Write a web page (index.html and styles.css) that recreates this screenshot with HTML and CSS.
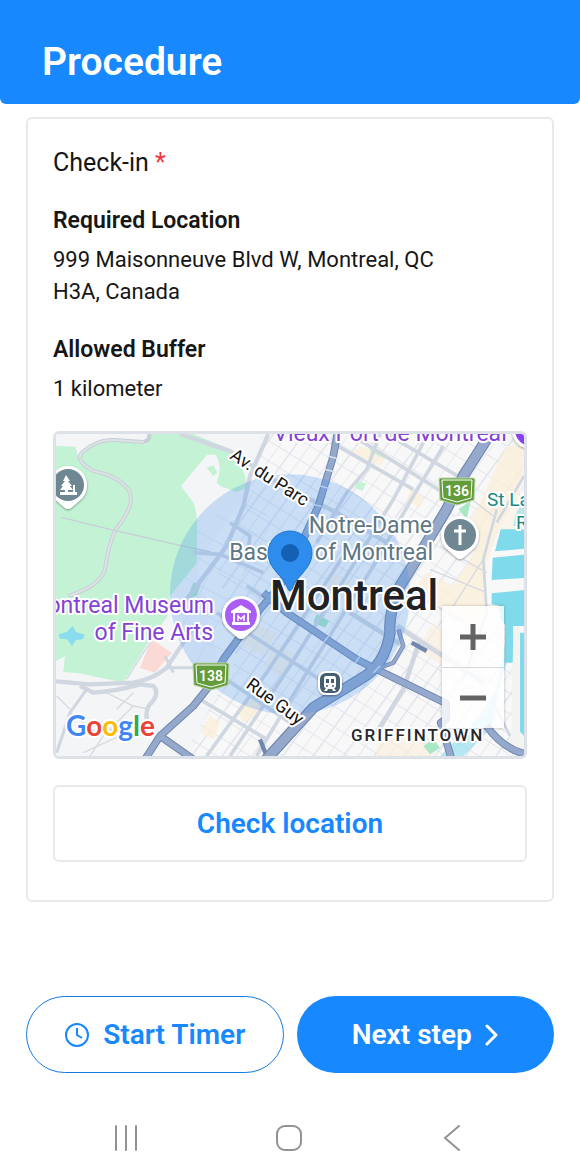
FILE: index.html
```html
<!DOCTYPE html>
<html lang="en">
<head>
<meta charset="utf-8">
<meta name="viewport" content="width=device-width, initial-scale=1">
<title>Procedure</title>
<link rel="stylesheet" href="styles.css">
</head>
<body>
<header class="header"><h1 class="header-title">Procedure</h1></header>
<main class="main">
  <section class="card">
    <h2 class="field-title">Check-in <span class="required">*</span></h2>
    <div class="info">
      <h3 class="info-label">Required Location</h3>
      <p class="info-text">999 Maisonneuve Blvd W, Montreal, QC<br>H3A, Canada</p>
    </div>
    <div class="info">
      <h3 class="info-label">Allowed Buffer</h3>
      <p class="info-text">1 kilometer</p>
    </div>
    <div class="map">
      <svg class="map-canvas" viewBox="0 0 468 322" preserveAspectRatio="xMidYMid slice" role="img" aria-label="Map of Montreal">
        <defs>
          <pattern id="blocks" width="74" height="52" patternUnits="userSpaceOnUse" patternTransform="rotate(32) skewX(-4)">
            <path d="M0 0H74M0 0V52M40 0V52" fill="none" stroke="#dde1e8" stroke-width="4"/>
          </pattern>
          <pattern id="blocks-wide" width="90" height="70" patternUnits="userSpaceOnUse" patternTransform="rotate(28)">
            <path d="M0 0H90M0 0V70" fill="none" stroke="#e2e6ec" stroke-width="4"/>
          </pattern>
          <filter id="shade" x="-30%" y="-30%" width="160%" height="170%"><feDropShadow dx="0" dy="1" stdDeviation="1" flood-opacity=".4"/></filter>
        </defs>
        <svg width="468" height="322" viewBox="18 24 1404 966">
          <rect x="18" y="24" width="1404" height="966" fill="#f4f5f6"/>
          <!-- built-up blocks -->
          <path d="M640 24H1320L1422 200V990H420L520 780L440 420L600 180Z" fill="#f8f8f9"/>
          <path d="M640 24H1422V200L1200 560L1422 620V990H400L560 700L500 400L600 180Z" fill="url(#blocks)"/>
          <path d="M440 310L600 200L700 330L560 640L440 740L370 560Z" fill="url(#blocks-wide)"/>
          <!-- commercial areas -->
          <g fill="#fbefd9">
            <path d="M1330 140L1290 230L1250 310L1290 350L1210 480L1130 440L1090 490L1180 560L1300 600L1310 410L1350 300L1400 230L1422 120V60H1370Z" opacity=".8"/>
            <path d="M980 930L1180 920L1150 990H980ZM1150 590L1180 620V720L1100 670Z" opacity=".6"/>
            <path d="M930 60L1010 90L990 120L910 80ZM1080 190L1120 210L1110 245L1070 225ZM560 850L620 810L640 850L580 890ZM480 870L510 890L490 940L450 920Z" opacity=".8"/>
            <path d="M600 590L680 620L640 690L570 660ZM680 650L740 690L700 760L640 720ZM850 440L910 470L880 530L820 500Z" opacity=".5"/>
          </g>
          <path d="M1340 320L1380 250L1422 210V330Z" fill="#faf5ea"/>
          <!-- parks -->
          <g fill="#c3f2d5">
            <path d="M18 60L76 62L84 90Q120 50 165 42L290 55L305 24H430L530 65L545 100Q592 125 588 185L560 198L512 180L500 170Q520 120 495 85L470 88L393 180L430 230Q443 260 441 310V410L360 510L350 575L300 640L220 770L90 742L40 738L45 690L18 705Z"/>
            <path d="M470 125L490 118L502 140L490 150ZM920 165L948 172L938 195L915 185ZM960 65L985 70L1015 90L1010 100L960 78Z"/>
            <path d="M1225 250L1262 225L1250 280ZM800 565L838 585L825 605L790 590ZM430 470L452 475L440 510L410 520ZM1120 960L1150 940L1170 965L1140 985Z" fill="#a9e8c5"/>
          </g>
          <path d="M305 640L365 680L315 740L270 725Z" fill="#fbd9d5"/>
          <path d="M26 625L50 618L68 600L78 618L104 626L98 640L78 642L66 660L52 640L30 638Z" fill="#8adcee"/>
          <!-- river and docks -->
          <g fill="#7fdaeb">
            <path d="M1352 310H1422V368L1335 376ZM1328 395L1422 386V456L1325 462ZM1325 502L1422 492V600H1368L1352 580L1345 538L1325 535ZM1375 590L1390 598V710H1365V600ZM1410 620H1422V930L1408 915Z"/>
            <path d="M1395 270L1422 215V300H1390ZM1340 790L1365 650L1372 705L1350 770L1330 880L1310 920L1240 990H1170L1230 930L1290 870Z" opacity=".55"/>
          </g>
          <path d="M1390 600H1410V920L1422 940V990H1370L1385 900Z" fill="#f3f3f2"/>
          <!-- park trails -->
          <g fill="none" stroke="#c7cfd6" stroke-linecap="round" stroke-linejoin="round">
            <path d="M60 508Q150 480 165 430Q180 330 205 300Q260 230 235 190Q205 150 130 135Q75 105 95 80Q140 40 190 42L280 48Q300 45 298 24" stroke-width="12"/>
            <path d="M60 508Q150 480 165 430Q180 330 205 300Q260 230 235 190Q205 150 130 135Q75 105 95 80Q140 40 190 42L280 48" stroke="#dde2e5" stroke-width="6"/>
            <path d="M34 274L180 310L380 356L480 378L620 430" stroke-width="4"/>
          </g>
          <!-- secondary streets -->
          <g fill="none" stroke="#d0d7e0" stroke-width="13" stroke-linejoin="round">
            <path d="M18 766L120 775L250 770Q310 760 350 725L440 590"/>
            <path d="M90 780L130 800Q200 795 270 775L310 780Q330 800 305 830Q280 850 295 900"/>
            <path d="M110 790L60 860L20 980M350 725H440M345 690L370 740" stroke-width="9"/>
            <path d="M390 24L540 75L700 180L860 260L1110 410"/>
            <path d="M655 24L600 150L580 240L530 360L500 400L380 560"/>
            <path d="M540 290L600 330L590 400M430 380L510 385L640 440" stroke-width="11"/>
            <path d="M800 24L1090 190M900 24L1180 200M1010 24L1240 160" stroke-width="11"/>
            <path d="M990 24L950 130L890 200L800 350M1120 50L1030 220L920 400L720 720L540 990" stroke-width="11"/>
            <path d="M1180 60L1090 210L970 420L770 740L620 990M880 390L650 740L470 990" stroke-width="11"/>
            <path d="M500 560L870 800M590 480L960 720M470 720L720 890M450 820L650 940" stroke-width="11"/>
            <path d="M1040 600L1180 690L1300 770M1110 640L1060 790L980 920M900 560L1060 660" stroke-width="14"/>
            <path d="M1340 250L1300 400L1310 560L1240 760M1422 150L1340 290M1330 830L1380 930" stroke-width="8"/>
          </g>
          <g fill="none" stroke="#d5dae1" stroke-width="4">
            <path d="M170 800L250 840L300 850M250 840L160 930L120 990M60 860L140 920L240 900M230 760L280 680L330 610M20 810L60 850M250 800L200 850M100 980L230 920L340 935"/>
            <path d="M1140 430L1310 500M1170 360L1310 440M1120 520L1250 590M1240 200L1330 270M1210 540L1300 400"/>
          </g>
          <!-- highways -->
          <g fill="none" stroke-linejoin="round">
            <g stroke="#7087af">
              <path d="M862 24L850 90L805 240L760 340L690 480L630 550L520 700L470 790L430 840L330 930L285 1000" stroke-width="23"/>
              <path d="M330 930L430 1000M640 500L710 560L830 640L920 700L1000 740L1188 832V880L1172 890L1205 1000M1310 900Q1360 970 1430 985" stroke-width="23"/>
              <path d="M1320 24L1240 150L1190 250L1100 400L1050 480Q1015 560 1020 620Q1005 720 930 760L790 845L640 1010" stroke-width="34"/>
              <path d="M1045 610L1060 660L1030 710L990 725M1085 650L1130 675M630 940L650 990" stroke-width="13"/>
            </g>
            <g stroke="#94a9cc">
              <path d="M862 24L850 90L805 240L760 340L690 480L630 550L520 700L470 790L430 840L330 930L285 1000" stroke-width="17"/>
              <path d="M330 930L430 1000M640 500L710 560L830 640L920 700L1000 740L1188 832V880L1172 890L1205 1000M1310 900Q1360 970 1430 985" stroke-width="17"/>
              <path d="M1320 24L1240 150L1190 250L1100 400L1050 480Q1015 560 1020 620Q1005 720 930 760L790 845L640 1010" stroke-width="27"/>
              <path d="M1045 610L1060 660L1030 710L990 725" stroke-width="8"/>
            </g>
            <path d="M833 90L862 98M825 130L855 138M810 180L840 188M790 235L815 242M780 270L804 278M820 650L840 625M915 712L932 687M970 740L990 720" stroke="#dbe4f0" stroke-width="4"/>
          </g>
          <!-- one kilometre buffer -->
          <circle cx="720" cy="505" r="360" fill="#3f8fee" fill-opacity=".25"/>
        </svg>

        <g class="map-label poi-purple">
          <text x="334" y="7" text-anchor="middle">Vieux Port de Montreal</text>
          <text x="158" y="179" text-anchor="end">Montreal Museum</text>
          <text x="157" y="206" text-anchor="end">of Fine Arts</text>
        </g>
        <g class="map-label poi-gray">
          <text x="376" y="99" text-anchor="end">Notre-Dame</text>
          <text x="377" y="126" text-anchor="end">Basilica of Montreal</text>
        </g>
        <g class="map-label poi-teal">
          <text x="431" y="72">St Lawrence</text>
          <text x="460" y="95">River</text>
        </g>
        <g class="map-label street">
          <text transform="translate(173 24) rotate(33)">Av. du Parc</text>
          <text transform="translate(189 253) rotate(36)">Rue Guy</text>
        </g>
        <text class="map-label district" x="295" y="307">GRIFFINTOWN</text>
        <text class="map-label city" x="214" y="176">Montreal</text>

        <!-- route shields -->
        <g class="shield">
          <path class="shield-edge" d="M385 44H417Q419 44 419 46L418 66L401 71L384 66L383 46Q383 44 385 44Z"/>
          <path class="shield-face" d="M386 46H416L415 64L401 68L387 64Z"/>
          <text x="401" y="62">136</text>
          <path class="shield-edge" d="M139 229H171Q173 229 173 231L172 251L155 256L138 251L137 231Q137 229 139 229Z"/>
          <path class="shield-face" d="M140 231H170L169 249L155 253L141 249Z"/>
          <text x="155" y="247">138</text>
        </g>

        <!-- place pins -->
        <g filter="url(#shade)" fill="#fff">
          <path d="M12 32a19 19 0 0 1 19 19q0 10-8 16l-8 7q-3 2-6 0l-8-7q-8-6-8-16a19 19 0 0 1 19-19Z"/>
          <path d="M404 82a19 19 0 0 1 19 19q0 10-8 16l-8 7q-3 2-6 0l-8-7q-8-6-8-16a19 19 0 0 1 19-19Z"/>
          <path d="M185 162a19 19 0 0 1 19 19q0 10-8 16l-8 7q-3 2-6 0l-8-7q-8-6-8-16a19 19 0 0 1 19-19Z"/>
          <circle cx="475" cy="-4" r="19"/>
          <rect x="262" y="237" width="24" height="24" rx="8"/>
        </g>
        <circle cx="12" cy="51" r="16" fill="#6f8792"/>
        <path d="M10 41L14 47H12L16 52H14L17 56H12V58H17V51H19V58H21V61H4V58H9V56H4L7 52H5L9 47H7Z" fill="#fff"/>
        <circle cx="404" cy="101" r="16" fill="#6f8792"/>
        <path d="M404 91V111M398 97H410" stroke="#fff" stroke-width="3" fill="none"/>
        <circle cx="185" cy="181" r="16" fill="#ab5cf5"/>
        <path d="M185 171L195 177V179H175V177ZM176 188H194V191H176Z" fill="#fff"/>
        <path d="M178 178V189M192 178V189" stroke="#fff" stroke-width="2" fill="none"/>
        <path d="M182 187V182L185 185L188 182V187" stroke="#fff" stroke-width="1.5" fill="none"/>
        <circle cx="475" cy="-4" r="16" fill="#8a3ff0"/>
        <rect x="264" y="239" width="20" height="20" rx="6" fill="#455f70"/>
        <path d="M270 242H278Q280 242 280 245V252Q280 254 278 254L280 257H277L276 255H272L271 257H268L270 254Q268 254 268 252V245Q268 242 270 242Z" fill="#fff"/>
        <path d="M270 245H273V249H270ZM275 245H278V249H275Z" fill="#455f70"/>
        <circle cx="271" cy="252" r="1" fill="#455f70"/><circle cx="277" cy="252" r="1" fill="#455f70"/>

        <!-- required location -->
        <path d="M234 97a22 22 0 0 1 22 22c0 9-5 15-10 21c-5 5-8 10-10 15q-2 4-4 0c-2-5-5-10-10-15c-5-6-10-12-10-21a22 22 0 0 1 22-22Z" fill="#2e8cec" stroke="#1c74cf" stroke-width="1"/>
        <circle cx="234" cy="119" r="9" fill="#1360b5"/>

        <text class="map-label brand" x="10" y="302"><tspan fill="#4285f4">G</tspan><tspan fill="#ea4335">o</tspan><tspan fill="#fbbc05">o</tspan><tspan fill="#4285f4">g</tspan><tspan fill="#34a853">l</tspan><tspan fill="#ea4335">e</tspan></text>
      </svg>
      <div class="zoom">
        <button class="zoom-button" type="button" aria-label="Zoom in"><svg width="28" height="28" viewBox="0 0 28 28"><path d="M14 1V27M1 14H27" stroke="#636363" stroke-width="5"/></svg></button>
        <button class="zoom-button" type="button" aria-label="Zoom out"><svg width="28" height="28" viewBox="0 0 28 28"><path d="M1 14H27" stroke="#636363" stroke-width="5"/></svg></button>
      </div>
    </div>
    <button class="check-button" type="button">Check location</button>
  </section>
  <div class="actions">
    <button class="action action-outline" type="button">
      <svg width="26" height="26" viewBox="0 0 26 26" fill="none" stroke="currentColor" stroke-width="2"><circle cx="13" cy="13" r="11"/><path d="M13 6V13L18 16"/></svg>
      Start Timer
    </button>
    <button class="action action-solid" type="button">
      Next step
      <svg width="14" height="22" viewBox="0 0 14 22" fill="none" stroke="currentColor" stroke-width="3" stroke-linecap="round" stroke-linejoin="round"><path d="M2 2L11 11L2 20"/></svg>
    </button>
  </div>
</main>
<nav class="system-nav" aria-label="System navigation">
  <button class="nav-button" type="button" aria-label="Recent apps"><svg width="28" height="28" viewBox="0 0 28 28"><path d="M4 2V26M14 2V26M24 2V26"/></svg></button>
  <button class="nav-button" type="button" aria-label="Home"><svg width="28" height="28" viewBox="0 0 28 28"><rect x="2" y="2" width="24" height="24" rx="8"/></svg></button>
  <button class="nav-button" type="button" aria-label="Back"><svg width="28" height="28" viewBox="0 0 28 28"><path d="M21 2L7 14L21 26"/></svg></button>
</nav>
</body>
</html>
```
FILE: styles.css
```css
* { box-sizing: border-box; }

body {
  margin: 0;
  min-height: 100vh;
  display: flex;
  flex-direction: column;
  background: #fff;
  color: #161616;
  font-family: Roboto, "Liberation Sans", sans-serif;
}

h1, h2, h3, p { margin: 0; }

button {
  font: inherit;
  padding: 0;
  border: 0;
  background: none;
  cursor: pointer;
}

.header {
  padding: 38px 42px 18px;
  background: #1788fe;
  border-radius: 0 0 6px 6px;
}

.header-title {
  color: #fff;
  font-size: 39px;
  font-weight: 600;
  line-height: 48px;
}

.main { padding: 13px 26px 0; }

.card {
  display: flex;
  flex-direction: column;
  gap: 26px;
  padding: 28px 25px 38px;
  border: 2px solid #e9e9ea;
  border-radius: 6px;
}

.field-title {
  font-size: 25px;
  font-weight: 400;
  line-height: 32px;
}

.required { color: #f0393f; }

.info {
  display: flex;
  flex-direction: column;
  gap: 7px;
}

.info-label {
  font-size: 23px;
  font-weight: 600;
  line-height: 32px;
}

.info-text {
  font-size: 22px;
  line-height: 32px;
}

.map {
  position: relative;
  overflow: hidden;
  border: 3px solid #dce2e8;
  border-radius: 6px;
}

.map-canvas {
  display: block;
  width: 100%;
  height: auto;
}

.map-label {
  paint-order: stroke;
  stroke: #fff;
  stroke-width: 4px;
  stroke-linejoin: round;
}

.poi-purple { fill: #8442d6; font-size: 23px; }
.poi-gray { fill: #5f7785; font-size: 23px; }
.poi-teal { fill: #168a83; font-size: 19px; }
.street { fill: #161616; font-size: 18px; }
.district { fill: #26282b; font-size: 17px; font-weight: 500; letter-spacing: 2px; }
.city { fill: #202124; font-size: 42px; font-weight: 500; }
.brand { font-family: Lato, sans-serif; font-size: 28px; font-weight: 700; }

.shield-edge { fill: #629c3b; stroke: #b9d5a5; stroke-width: 1px; }
.shield-face { fill: #629c3b; stroke: #fff; stroke-width: 1px; }
.shield text { fill: #fff; font-size: 14px; font-weight: 600; text-anchor: middle; }

.zoom {
  position: absolute;
  right: 20px;
  bottom: 28px;
  display: flex;
  flex-direction: column;
  width: 62px;
  background: rgba(255, 255, 255, 0.82);
  box-shadow: 0 0 3px rgba(0, 0, 0, 0.25);
}

.zoom-button {
  display: grid;
  place-items: center;
  height: 61px;
}

.zoom-button + .zoom-button { border-top: 1px solid #d5d7da; }

.check-button {
  height: 77px;
  border: 2px solid #e9e9ea;
  border-radius: 6px;
  color: #1788fe;
  font-size: 28px;
  font-weight: 600;
}

.actions {
  display: grid;
  grid-template-columns: 1fr 1fr;
  gap: 13px;
  padding-top: 94px;
}

.action {
  display: flex;
  align-items: center;
  justify-content: center;
  gap: 13px;
  height: 77px;
  border-radius: 39px;
  font-size: 28px;
  font-weight: 600;
}

.action-outline { border: 1px solid #1479dc; color: #1788fe; }
.action-solid { background: #1788fe; color: #fff; }

.system-nav {
  display: flex;
  justify-content: space-between;
  margin-top: auto;
  padding: 0 114px 24px 112px;
}

.nav-button svg {
  display: block;
  fill: none;
  stroke: #929292;
  stroke-width: 2px;
  stroke-linecap: round;
  stroke-linejoin: round;
}
```
